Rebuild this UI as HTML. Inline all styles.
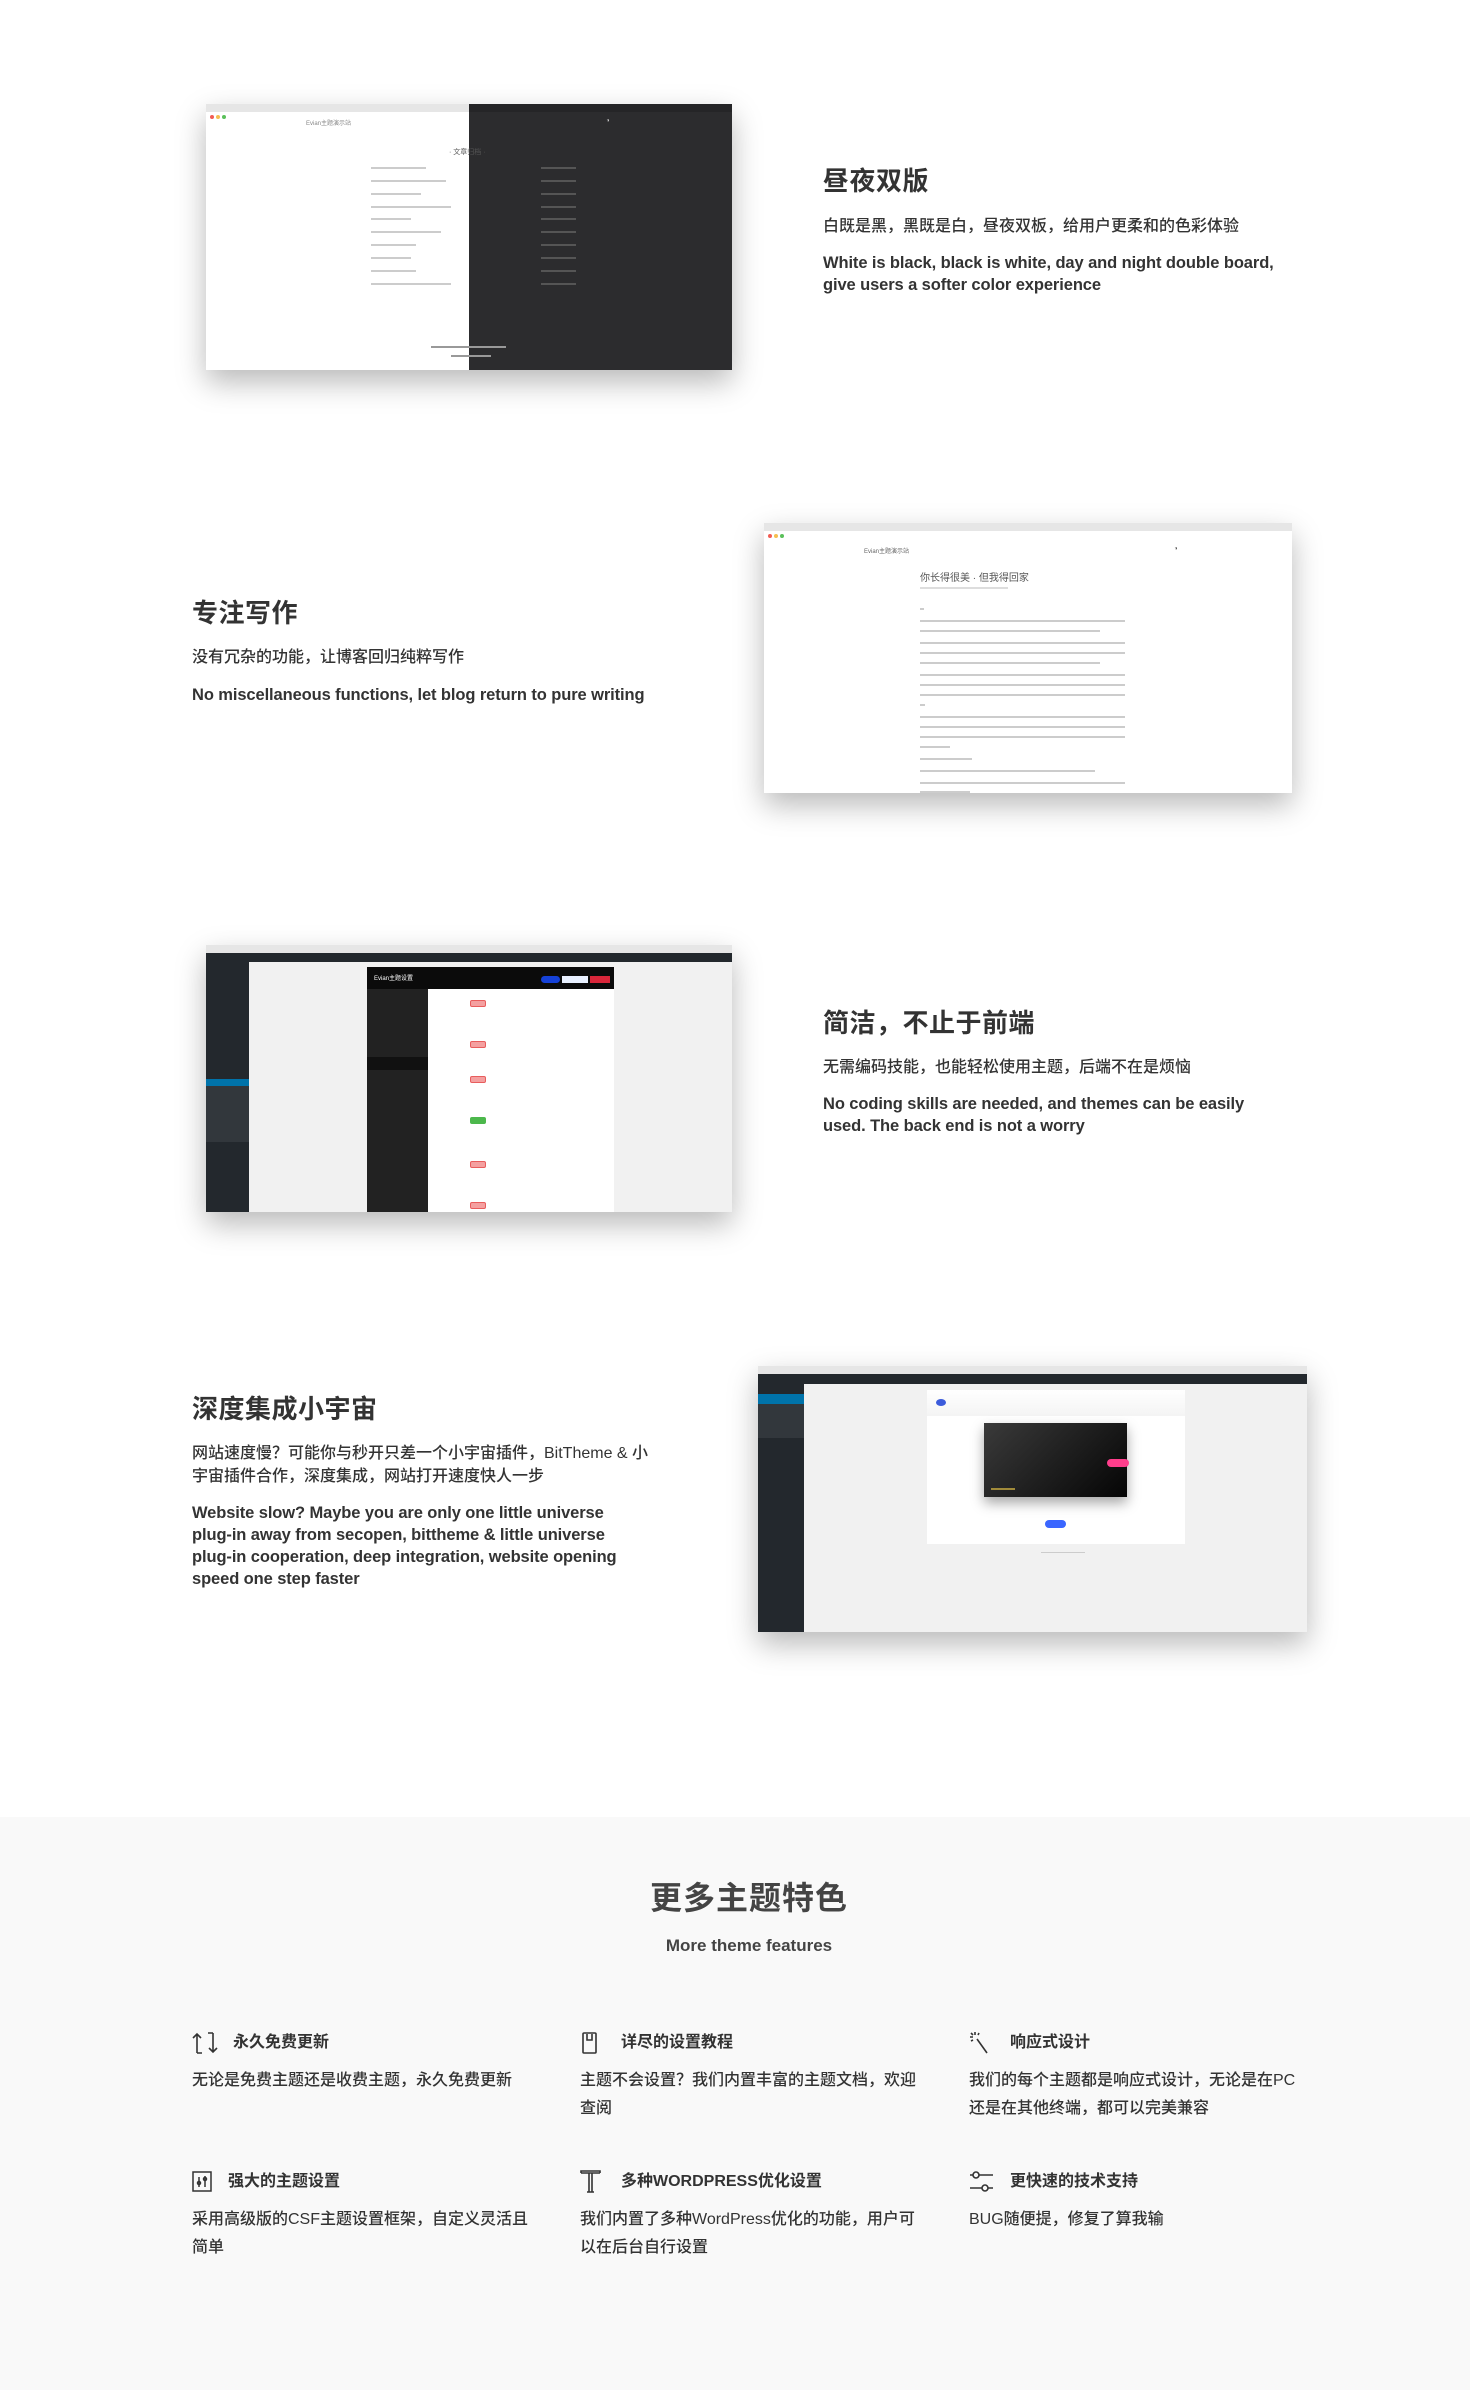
<!DOCTYPE html>
<html><head><meta charset="utf-8"><style>
*{margin:0;padding:0;box-sizing:border-box}
body{width:1470px;height:2390px;background:#fff;font-family:"Liberation Sans","Noto Sans CJK SC",sans-serif;color:#333;position:relative;overflow:hidden}
.abs{position:absolute}
h2{position:absolute;font-size:26px;font-weight:700;color:#333;line-height:36px;letter-spacing:0.5px}
.zh{position:absolute;font-size:16px;letter-spacing:0;line-height:23px;color:#333;font-weight:500}
.en{position:absolute;font-size:16.5px;font-weight:700;line-height:22px;color:#333;letter-spacing:-0.1px}
.win{position:absolute;box-shadow:0 12px 28px rgba(0,0,0,.28);background:#fff;overflow:hidden}
.tb{position:absolute;left:0;top:0;right:0;height:8px;background:#e6e6e6}
.dots{position:absolute;left:4px;top:2px;height:4px}
.dots i{display:inline-block;width:4px;height:4px;border-radius:50%;margin-right:2px}
.ln{position:absolute;height:2px;background:#ccc}
.gray{position:absolute;left:0;top:1817px;width:1470px;height:573px;background:#f9f9f9}
.ft{position:absolute;width:340px}
.ft .hd{position:absolute;left:0;top:0;height:24px;font-size:16px;font-weight:700;color:#333;line-height:24px;white-space:nowrap}
.ft .hd svg{position:absolute;left:0;top:0}
.ft .hd span{position:absolute;left:41px;top:0}
.ft .ds{position:absolute;left:0;top:36px;width:340px;font-size:16px;line-height:28px;color:#333;font-weight:500}
</style></head><body>

<!-- Section 1 -->
<div class="win" style="left:206px;top:104px;width:526px;height:266px">
  <div style="position:absolute;left:263px;top:0;width:263px;height:266px;background:#2c2c2e"></div>
  <div class="tb" style="right:263px"></div>
  <div class="tb" style="left:263px;background:#252527"></div>
  <div class="dots"><i style="background:#f25c54"></i><i style="background:#f6be4f"></i><i style="background:#5ac05a"></i></div>
  <div class="abs" style="left:100px;top:14px;font-size:6px;color:#888">Evian主题演示站</div>
  <div class="abs" style="left:400px;top:14px;font-size:6px;color:#ccc">◑</div>
  <div class="abs" style="left:243px;top:43px;font-size:7px;color:#555">· 文章归档 ·</div>
  <div class="ln" style="left:165px;top:63px;width:55px"></div><div class="ln" style="left:335px;top:63px;width:35px;background:#555"></div>
  <div class="ln" style="left:165px;top:76px;width:75px"></div><div class="ln" style="left:335px;top:76px;width:35px;background:#555"></div>
  <div class="ln" style="left:165px;top:89px;width:50px"></div><div class="ln" style="left:335px;top:89px;width:35px;background:#555"></div>
  <div class="ln" style="left:165px;top:102px;width:80px"></div><div class="ln" style="left:335px;top:102px;width:35px;background:#555"></div>
  <div class="ln" style="left:165px;top:114px;width:40px"></div><div class="ln" style="left:335px;top:114px;width:35px;background:#555"></div>
  <div class="ln" style="left:165px;top:127px;width:70px"></div><div class="ln" style="left:335px;top:127px;width:35px;background:#555"></div>
  <div class="ln" style="left:165px;top:140px;width:45px"></div><div class="ln" style="left:335px;top:140px;width:35px;background:#555"></div>
  <div class="ln" style="left:165px;top:153px;width:40px"></div><div class="ln" style="left:335px;top:153px;width:35px;background:#555"></div>
  <div class="ln" style="left:165px;top:166px;width:45px"></div><div class="ln" style="left:335px;top:166px;width:35px;background:#555"></div>
  <div class="ln" style="left:165px;top:179px;width:80px"></div><div class="ln" style="left:335px;top:179px;width:35px;background:#555"></div>
  <div class="ln" style="left:225px;top:242px;width:75px;background:#999"></div>
  <div class="ln" style="left:245px;top:251px;width:40px;background:#999"></div>
</div>
<h2 style="left:823px;top:163px">昼夜双版</h2>
<div class="zh" style="left:823px;top:215px;width:520px">白既是黑，黑既是白，昼夜双板，给用户更柔和的色彩体验</div>
<div class="en" style="left:823px;top:252px;width:485px">White is black, black is white, day and night double board, give users a softer color experience</div>

<!-- Section 2 -->
<div class="win" style="left:764px;top:523px;width:528px;height:270px">
  <div class="tb"></div>
  <div class="dots"><i style="background:#f25c54"></i><i style="background:#f6be4f"></i><i style="background:#5ac05a"></i></div>
  <div class="abs" style="left:100px;top:23px;font-size:6px;color:#666">Evian主题演示站</div>
  <div class="abs" style="left:410px;top:23px;font-size:6px;color:#555">◑</div>
  <div class="abs" style="left:156px;top:46px;font-size:10px;color:#555">你长得很美 · 但我得回家</div>
  <div class="ln" style="left:156px;top:64px;width:88px;background:#ddd"></div>
  <div class="ln" style="left:156px;top:85px;width:4px"></div>
  <div class="ln" style="left:156px;top:97px;width:205px"></div><div class="ln" style="left:156px;top:107px;width:180px"></div>
  <div class="ln" style="left:156px;top:119px;width:205px"></div><div class="ln" style="left:156px;top:129px;width:205px"></div><div class="ln" style="left:156px;top:139px;width:180px"></div>
  <div class="ln" style="left:156px;top:151px;width:205px"></div><div class="ln" style="left:156px;top:161px;width:205px"></div><div class="ln" style="left:156px;top:171px;width:205px"></div><div class="ln" style="left:156px;top:181px;width:5px"></div>
  <div class="ln" style="left:156px;top:193px;width:205px"></div><div class="ln" style="left:156px;top:203px;width:205px"></div><div class="ln" style="left:156px;top:213px;width:205px"></div><div class="ln" style="left:156px;top:223px;width:30px"></div>
  <div class="ln" style="left:156px;top:235px;width:52px"></div>
  <div class="ln" style="left:156px;top:247px;width:175px"></div>
  <div class="ln" style="left:156px;top:259px;width:205px"></div><div class="ln" style="left:156px;top:268px;width:50px"></div>
</div>
<h2 style="left:192px;top:595px">专注写作</h2>
<div class="zh" style="left:192px;top:646px;width:500px">没有冗杂的功能，让博客回归纯粹写作</div>
<div class="en" style="left:192px;top:684px;width:520px">No miscellaneous functions, let blog return to pure writing</div>

<!-- Section 3 -->
<div class="win" style="left:206px;top:945px;width:526px;height:267px;background:#f1f1f1">
  <div class="tb" style="height:8px"></div>
  <div class="dots"><i style="background:#f25c54"></i><i style="background:#f6be4f"></i><i style="background:#5ac05a"></i></div>
  <div class="abs" style="left:0;top:8px;width:526px;height:9px;background:#23282d"></div>
  <div class="abs" style="left:0;top:17px;width:43px;height:250px;background:#23282d"></div>
  <div class="abs" style="left:0;top:134px;width:43px;height:7px;background:#0073aa"></div>
  <div class="abs" style="left:0;top:141px;width:43px;height:56px;background:#32373c"></div>
  <div class="abs" style="left:161px;top:22px;width:247px;height:245px;background:#fff"></div>
  <div class="abs" style="left:161px;top:22px;width:247px;height:22px;background:#0b0b0b"></div>
  <div class="abs" style="left:168px;top:28px;font-size:6px;color:#fff">Evian主题设置</div>
  <div class="abs" style="left:335px;top:31px;width:19px;height:7px;border-radius:4px;background:#1541d8"></div>
  <div class="abs" style="left:356px;top:31px;width:26px;height:7px;background:#e8f0ff"></div>
  <div class="abs" style="left:384px;top:31px;width:20px;height:7px;background:#d9263a"></div>
  <div class="abs" style="left:161px;top:44px;width:61px;height:223px;background:#222"></div>
  <div class="abs" style="left:161px;top:112px;width:61px;height:13px;background:#111"></div>
  <div class="abs" style="left:264px;top:55px;width:16px;height:7px;border:1.5px solid #e85d5d;border-radius:2px;background:#f4a0a0"></div>
  <div class="abs" style="left:264px;top:96px;width:16px;height:7px;border:1.5px solid #e85d5d;border-radius:2px;background:#f4a0a0"></div>
  <div class="abs" style="left:264px;top:131px;width:16px;height:7px;border:1.5px solid #e85d5d;border-radius:2px;background:#f4a0a0"></div>
  <div class="abs" style="left:264px;top:172px;width:16px;height:7px;border-radius:2px;background:#4cb84c"></div>
  <div class="abs" style="left:264px;top:216px;width:16px;height:7px;border:1.5px solid #e85d5d;border-radius:2px;background:#f4a0a0"></div>
  <div class="abs" style="left:264px;top:257px;width:16px;height:7px;border:1.5px solid #e85d5d;border-radius:2px;background:#f4a0a0"></div>
</div>
<h2 style="left:823px;top:1005px">简洁，不止于前端</h2>
<div class="zh" style="left:823px;top:1056px;width:520px">无需编码技能，也能轻松使用主题，后端不在是烦恼</div>
<div class="en" style="left:823px;top:1093px;width:455px">No coding skills are needed, and themes can be easily used. The back end is not a worry</div>

<!-- Section 4 -->
<div class="win" style="left:758px;top:1366px;width:549px;height:266px;background:#f1f1f1">
  <div class="tb"></div>
  <div class="dots"><i style="background:#f25c54"></i><i style="background:#f6be4f"></i><i style="background:#5ac05a"></i></div>
  <div class="abs" style="left:0;top:8px;width:549px;height:10px;background:#23282d"></div>
  <div class="abs" style="left:0;top:18px;width:46px;height:248px;background:#23282d"></div>
  <div class="abs" style="left:0;top:28px;width:46px;height:10px;background:#0073aa"></div>
  <div class="abs" style="left:0;top:38px;width:46px;height:34px;background:#32373c"></div>
  <div class="abs" style="left:169px;top:24px;width:258px;height:154px;background:#fff"></div>
  <div class="abs" style="left:169px;top:24px;width:258px;height:26px;background:linear-gradient(#fff,#f4f4f4)"></div>
  <div class="abs" style="left:178px;top:33px;width:10px;height:7px;border-radius:50%;background:#3b5bdb"></div>
  <div class="abs" style="left:226px;top:57px;width:143px;height:74px;background:linear-gradient(135deg,#3a3a3a,#050505);box-shadow:0 6px 12px rgba(0,0,0,.35)"></div>
  <div class="abs" style="left:349px;top:93px;width:22px;height:8px;border-radius:4px;background:#ff3e8c"></div>
  <div class="abs" style="left:233px;top:122px;width:24px;height:2px;background:#a08a3a"></div>
  <div class="abs" style="left:287px;top:154px;width:21px;height:8px;border-radius:4px;background:#3a66ff"></div>
  <div class="ln" style="left:283px;top:186px;width:44px;background:#ccc;height:1px"></div>
</div>
<h2 style="left:192px;top:1391px">深度集成小宇宙</h2>
<div class="zh" style="left:192px;top:1442px;width:472px">网站速度慢？可能你与秒开只差一个小宇宙插件，BitTheme &amp; 小宇宙插件合作，深度集成，网站打开速度快人一步</div>
<div class="en" style="left:192px;top:1502px;width:462px">Website slow? Maybe you are only one little universe plug‑in away from secopen, bittheme &amp; little universe plug‑in cooperation, deep integration, website opening speed one step faster</div>

<!-- Gray section -->
<div class="gray"></div>
<div class="abs" style="left:14px;top:1878px;width:1470px;text-align:center;font-size:32px;font-weight:700;color:#444;letter-spacing:1px;line-height:40px">更多主题特色</div>
<div class="abs" style="left:14px;top:1934px;width:1470px;text-align:center;font-size:17px;font-weight:700;color:#444;line-height:24px">More theme features</div>

<div class="ft" style="left:192px;top:2031px">
  <div class="hd"><svg width="26" height="24" viewBox="0 0 26 24" fill="none" stroke="#333" stroke-width="1.6"><path d="M5 22V3M1 7l4-4 4 4M5 22h5M21 2v19M17 17l4 4 4-4M21 2h-5"/></svg><span>永久免费更新</span></div>
  <div class="ds">无论是免费主题还是收费主题，永久免费更新</div>
</div>
<div class="ft" style="left:580px;top:2031px">
  <div class="hd"><svg width="20" height="24" viewBox="0 0 20 24" fill="none" stroke="#333" stroke-width="1.6"><rect x="3" y="2" width="13" height="20" rx="1"/><path d="M7 3v6h5V3"/></svg><span>详尽的设置教程</span></div>
  <div class="ds">主题不会设置？我们内置丰富的主题文档，欢迎查阅</div>
</div>
<div class="ft" style="left:969px;top:2031px">
  <div class="hd"><svg width="24" height="24" viewBox="0 0 24 24" fill="none" stroke="#333" stroke-width="1.6"><path d="M8 8l10 14M6 1v3M1 6h3M2 2l2 2M10 2l-1 2M2 10l2-1"/></svg><span>响应式设计</span></div>
  <div class="ds">我们的每个主题都是响应式设计，无论是在PC还是在其他终端，都可以完美兼容</div>
</div>
<div class="ft" style="left:192px;top:2170px">
  <div class="hd"><svg width="22" height="24" viewBox="0 0 22 24" fill="none" stroke="#333" stroke-width="1.5"><rect x="1" y="2" width="18" height="19"/><path d="M7 7v10M13 6v11"/><circle cx="7" cy="13" r="1.5"/><circle cx="13" cy="9" r="1.5"/></svg><span style="left:36px">强大的主题设置</span></div>
  <div class="ds">采用高级版的CSF主题设置框架，自定义灵活且简单</div>
</div>
<div class="ft" style="left:580px;top:2170px">
  <div class="hd"><svg width="22" height="24" viewBox="0 0 22 24" fill="none" stroke="#333" stroke-width="1.6"><path d="M1 3V1h19v2M1 3h19M9 3v19h3V3M7 22h7"/></svg><span>多种WORDPRESS优化设置</span></div>
  <div class="ds">我们内置了多种WordPress优化的功能，用户可以在后台自行设置</div>
</div>
<div class="ft" style="left:969px;top:2170px">
  <div class="hd"><svg width="26" height="24" viewBox="0 0 26 24" fill="none" stroke="#333" stroke-width="1.6"><circle cx="7" cy="5" r="3"/><circle cx="16" cy="18" r="3"/><path d="M10 5h14M1 5h3M1 18h12M19 18h5"/></svg><span>更快速的技术支持</span></div>
  <div class="ds">BUG随便提，修复了算我输</div>
</div>
</body></html>
